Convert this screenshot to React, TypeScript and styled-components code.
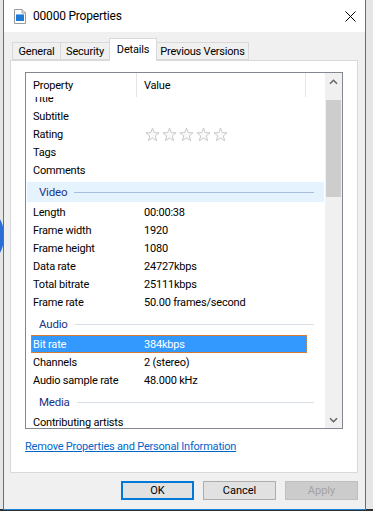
import { useLayoutEffect, useRef } from "react";
import styled, { createGlobalStyle } from "styled-components";

const UI_FONT = `Roboto, "Liberation Sans", Arial, sans-serif`;

const GlobalStyle = createGlobalStyle`
  html, body {
    margin: 0;
    padding: 0;
    background: #e3e3e3;
  }
  * {
    box-sizing: border-box;
  }
`;

const Desktop = styled.div`
  position: relative;
  width: 373px;
  height: 511px;
  padding-left: 3px;
  overflow: hidden;
  background: linear-gradient(to bottom, #e6e6e6 0, #e6e6e6 509px, #2f2f2f 509px);
  font-family: ${UI_FONT};
  font-size: 11px;
  letter-spacing: -0.2px;
  color: #000;
`;

// blue thing on the desktop peeking out from behind the window
const DesktopBlob = styled.div`
  position: absolute;
  left: -14px;
  top: 216px;
  width: 18px;
  height: 40px;
  border-radius: 50%;
  background: #2b6fd6;
`;

const Window = styled.div`
  position: relative;
  width: 363px;
  height: 510px;
  display: flex;
  flex-direction: column;
  border: 1px solid #1883d7;
  border-top: none;
  background: #f0f0f0;
`;

const TitleBar = styled.div`
  height: 32px;
  flex-shrink: 0;
  display: flex;
  align-items: center;
  padding: 0 9px 0 10px;
  background: #fff;
`;

const TitleText = styled.span`
  flex: 1;
  margin-left: 7px;
  font-size: 12px;
`;

const Body = styled.div`
  flex: 1;
  display: flex;
  flex-direction: column;
  padding: 6px 7px 9px 6px;
`;

const TabStrip = styled.div`
  height: 22px;
  display: flex;
  align-items: flex-end;
  padding-left: 2px;
  position: relative;
  z-index: 1;
`;

const Tab = styled.div<{ $active?: boolean; $w: number }>`
  width: ${(p) => p.$w}px;
  height: ${(p) => (p.$active ? 23 : 18)}px;
  margin-bottom: ${(p) => (p.$active ? -1 : 0)}px;
  display: flex;
  align-items: center;
  justify-content: center;
  border: 1px solid #d9d9d9;
  border-bottom: ${(p) => (p.$active ? "none" : "1px solid #d9d9d9")};
  background: ${(p) => (p.$active ? "#fff" : "#f0f0f0")};
  padding-bottom: ${(p) => (p.$active ? 2 : 0)}px;
  & + & {
    margin-left: -1px;
  }
`;

const Panel = styled.div`
  height: 413px;
  display: flex;
  flex-direction: column;
  padding: 11px 14px 0 14px;
  border: 1px solid #d9d9d9;
  background: #fff;
`;

const ListBox = styled.div`
  height: 357px;
  display: flex;
  border: 1px solid #828790;
  background: #fff;
`;

const ListMain = styled.div`
  flex: 1;
  display: flex;
  flex-direction: column;
  min-width: 0;
`;

const Header = styled.div`
  height: 24px;
  flex-shrink: 0;
  display: flex;
`;

const HeaderCell = styled.div<{ $w?: number }>`
  width: ${(p) => (p.$w ? `${p.$w}px` : "auto")};
  flex: ${(p) => (p.$w ? "none" : 1)};
  height: 100%;
  display: flex;
  align-items: center;
  padding-left: 7px;
  border-right: ${(p) => (p.$w ? "1px solid #e5e5e5" : "none")};
`;

const Viewport = styled.div`
  flex: 1;
  overflow: hidden;
`;

const Row = styled.div<{ $selected?: boolean }>`
  width: 276px;
  height: 18px;
  margin-left: 5px;
  display: flex;
  align-items: center;
  background: ${(p) => (p.$selected ? "#3399ff" : "transparent")};
  color: ${(p) => (p.$selected ? "#fff" : "#000")};
  outline: ${(p) => (p.$selected ? "1px dotted #d9823b" : "none")};
  outline-offset: -1px;
`;

const NameCell = styled.div`
  width: 106px;
  padding-left: 2px;
  white-space: nowrap;
`;

const ValueCell = styled.div`
  flex: 1;
  padding-left: 7px;
  white-space: nowrap;
  display: flex;
  align-items: center;
`;

const GroupRow = styled.div<{ $hot?: boolean }>`
  height: 20px;
  margin: 3px 1px 1px 1px;
  display: flex;
  align-items: center;
  padding: 0 10px 0 12px;
  background: ${(p) => (p.$hot ? "#e5f3ff" : "transparent")};
  color: #1e3287;
  font-size: 11.5px;
`;

const GroupLine = styled.div<{ $hot?: boolean }>`
  flex: 1;
  height: 1px;
  margin-left: 7px;
  background: ${(p) => (p.$hot ? "#a9bedb" : "#d7dee8")};
`;

const Stars = styled.div`
  display: flex;
  gap: 2px;
  margin-left: 1px;
`;

const ScrollBar = styled.div`
  width: 17px;
  display: flex;
  flex-direction: column;
  background: #f0f0f0;
`;

const ScrollArrow = styled.div`
  height: 17px;
  flex-shrink: 0;
  display: flex;
  align-items: center;
  justify-content: center;
`;

const ScrollTrack = styled.div`
  flex: 1;
  padding: 10px 1px 0 1px;
`;

const ScrollThumb = styled.div`
  height: 97px;
  background: #cdcdcd;
`;

const LinkText = styled.a`
  margin-top: 11px;
  align-self: flex-start;
  color: #0066cc;
  text-decoration: underline;
  line-height: 14px;
  cursor: pointer;
`;

const Footer = styled.div`
  display: flex;
  justify-content: flex-end;
  gap: 9px;
  margin-top: 8px;
`;

const Button = styled.button<{ $primary?: boolean }>`
  width: 73px;
  height: 19px;
  padding: 0;
  font-family: ${UI_FONT};
  font-size: 11px;
  color: ${(p) => (p.disabled ? "#a3a3a3" : "#000")};
  background: ${(p) => (p.disabled ? "#cccccc" : "#e1e1e1")};
  border: ${(p) =>
    p.$primary ? "2px solid #0078d7" : p.disabled ? "1px solid #bfbfbf" : "1px solid #adadad"};
`;

type Item =
  | { kind: "prop"; name: string; value?: string; stars?: boolean; selected?: boolean }
  | { kind: "group"; name: string; hot?: boolean };

const items: Item[] = [
  { kind: "prop", name: "Title" },
  { kind: "prop", name: "Subtitle" },
  { kind: "prop", name: "Rating", stars: true },
  { kind: "prop", name: "Tags" },
  { kind: "prop", name: "Comments" },
  { kind: "group", name: "Video", hot: true },
  { kind: "prop", name: "Length", value: "00:00:38" },
  { kind: "prop", name: "Frame width", value: "1920" },
  { kind: "prop", name: "Frame height", value: "1080" },
  { kind: "prop", name: "Data rate", value: "24727kbps" },
  { kind: "prop", name: "Total bitrate", value: "25111kbps" },
  { kind: "prop", name: "Frame rate", value: "50.00 frames/second" },
  { kind: "group", name: "Audio" },
  { kind: "prop", name: "Bit rate", value: "384kbps", selected: true },
  { kind: "prop", name: "Channels", value: "2 (stereo)" },
  { kind: "prop", name: "Audio sample rate", value: "48.000 kHz" },
  { kind: "group", name: "Media" },
  { kind: "prop", name: "Contributing artists" },
];

function FileIcon() {
  return (
    <svg width="12" height="15" viewBox="0 0 12 15">
      <path d="M0.5 0.5 H8 L11.5 4 V14.5 H0.5 Z" fill="#fff" stroke="#9a9a9a" />
      <path d="M8 0.5 V4 H11.5" fill="none" stroke="#9a9a9a" />
      <rect x="2" y="6" width="8" height="6" fill="#1e7ad6" />
      <rect x="2" y="5" width="8" height="1" fill="#7fb4e8" />
    </svg>
  );
}

function CloseIcon() {
  return (
    <svg width="11" height="11" viewBox="0 0 11 11">
      <path d="M0.5 0.5 L10.5 10.5 M10.5 0.5 L0.5 10.5" stroke="#000" strokeWidth="1" />
    </svg>
  );
}

function Star() {
  return (
    <svg width="15" height="15" viewBox="0 0 16 16">
      <path
        d="M8 1.2 L9.9 6 L15 6.2 L11 9.4 L12.4 14.6 L8 11.7 L3.6 14.6 L5 9.4 L1 6.2 L6.1 6 Z"
        fill="#fafafa"
        stroke="#c4c4c4"
        strokeWidth="1"
        strokeLinejoin="round"
      />
    </svg>
  );
}

function Chevron({ down }: { down?: boolean }) {
  return (
    <svg width="9" height="6" viewBox="0 0 9 6">
      <path
        d={down ? "M1 1.2 L4.5 4.7 L8 1.2" : "M1 4.8 L4.5 1.3 L8 4.8"}
        fill="none"
        stroke="#606060"
        strokeWidth="1.4"
      />
    </svg>
  );
}

function PropertyList() {
  const viewRef = useRef<HTMLDivElement>(null);
  useLayoutEffect(() => {
    // list is scrolled a bit so the "Title" row hides under the header
    if (viewRef.current) viewRef.current.scrollTop = 8;
  }, []);

  return (
    <ListBox>
      <ListMain>
        <Header>
          <HeaderCell $w={111}>Property</HeaderCell>
          <HeaderCell $w={169}>Value</HeaderCell>
          <HeaderCell />
        </Header>
        <Viewport ref={viewRef}>
          {items.map((it) =>
            it.kind === "group" ? (
              <GroupRow key={it.name} $hot={it.hot}>
                {it.name}
                <GroupLine $hot={it.hot} />
              </GroupRow>
            ) : (
              <Row key={it.name} $selected={it.selected}>
                <NameCell>{it.name}</NameCell>
                <ValueCell>
                  {it.stars ? (
                    <Stars>
                      {[0, 1, 2, 3, 4].map((i) => (
                        <Star key={i} />
                      ))}
                    </Stars>
                  ) : (
                    it.value
                  )}
                </ValueCell>
              </Row>
            )
          )}
        </Viewport>
      </ListMain>
      <ScrollBar>
        <ScrollArrow>
          <Chevron />
        </ScrollArrow>
        <ScrollTrack>
          <ScrollThumb />
        </ScrollTrack>
        <ScrollArrow>
          <Chevron down />
        </ScrollArrow>
      </ScrollBar>
    </ListBox>
  );
}

export default function App() {
  return (
    <>
      <GlobalStyle />
      <Desktop>
        <DesktopBlob />
        <Window>
          <TitleBar>
            <FileIcon />
            <TitleText>00000 Properties</TitleText>
            <CloseIcon />
          </TitleBar>
          <Body>
            <TabStrip>
              <Tab $w={49}>General</Tab>
              <Tab $w={50}>Security</Tab>
              <Tab $w={48} $active>
                Details
              </Tab>
              <Tab $w={93}>Previous Versions</Tab>
            </TabStrip>
            <Panel>
              <PropertyList />
              <LinkText>Remove Properties and Personal Information</LinkText>
            </Panel>
            <Footer>
              <Button $primary>OK</Button>
              <Button>Cancel</Button>
              <Button disabled>Apply</Button>
            </Footer>
          </Body>
        </Window>
      </Desktop>
    </>
  );
}
